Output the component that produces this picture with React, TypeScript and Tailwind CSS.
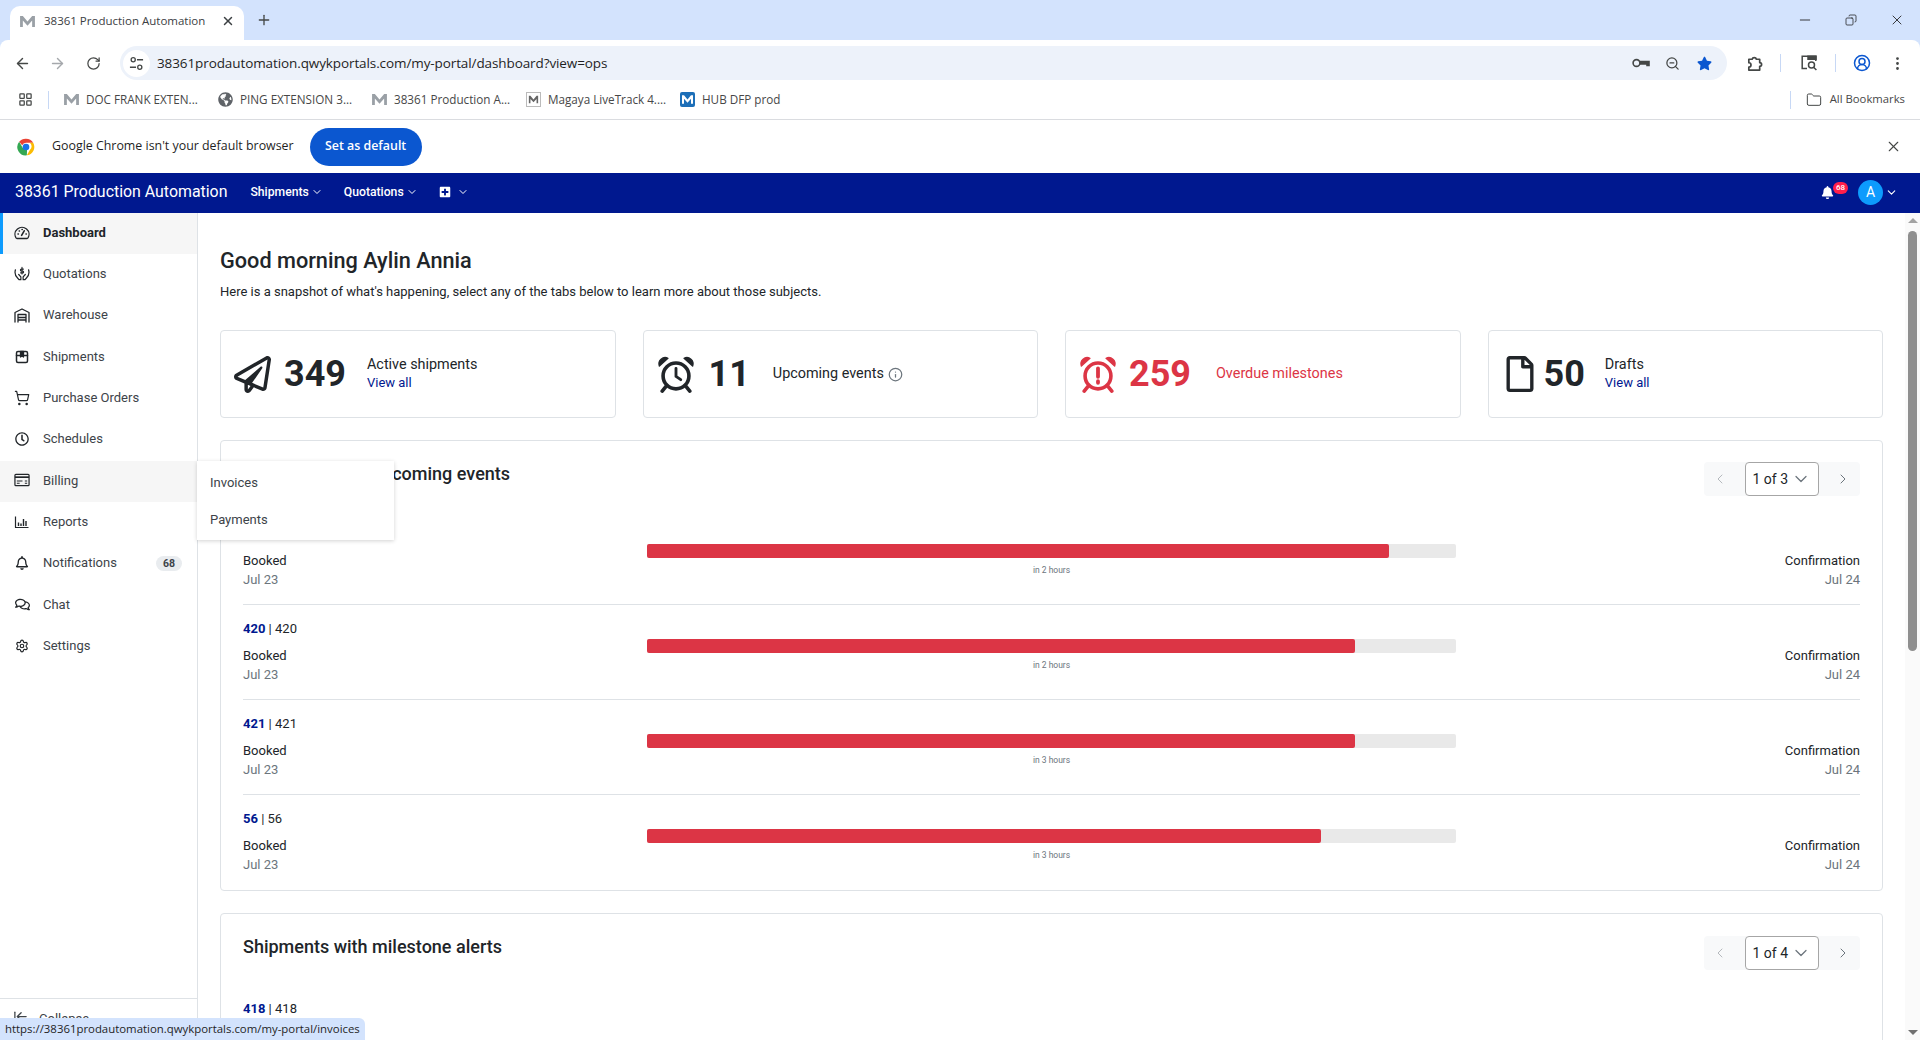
import React from "react"
import {
  ArrowLeft,
  ArrowRight,
  RotateCw,
  Plus,
  X,
  Minus,
  ZoomOut,
  ChevronDown,
  ChevronLeft,
  ChevronRight,
  Folder,
  ShoppingCart,
  Settings,
  Info,
  CircleUserRound,
  EllipsisVertical,
  LayoutGrid,
  Copy,
  ArrowLeftToLine,
} from "lucide-react"
import {
  FaRegPaperPlane,
  FaRegFile,
  FaBell,
  FaStar,
  FaPlusSquare,
  FaGlobeAmericas,
  FaRegClock,
  FaRegBell,
  FaRegComments,
} from "react-icons/fa"

const chromeFont = "font-['Open_Sans',sans-serif]"

const MLogo = ({ className = "text-[#9aa0a6]" }: { className?: string }) => (
  <svg viewBox="0 0 16 14" className={`w-[15px] h-[13px] ${className}`} fill="currentColor">
    <path d="M0 13V1h3l5 6 5-6h3v12h-3V6L8 11.5 3 6v7z" />
  </svg>
)

const ChromeLogo = () => (
  <svg viewBox="0 0 48 48" className="w-5 h-5">
    <path d="M24 4a20 20 0 0 1 17.3 10H24a10 10 0 0 0-9.2 6L7.6 11.6A20 20 0 0 1 24 4z" fill="#ea4335" />
    <path d="M41.3 14A20 20 0 0 1 26 43.9l8-13.9A10 10 0 0 0 32.6 14z" fill="#fbbc04" />
    <path d="M26 43.9A20 20 0 0 1 7.6 11.6L16 26a10 10 0 0 0 10.6 3.7z" fill="#34a853" />
    <circle cx="24" cy="24" r="8" fill="#1a73e8" />
  </svg>
)

const TuneIcon = () => (
  <svg viewBox="0 0 16 16" className="w-[15px] h-[15px] text-[#444746]" fill="none" stroke="currentColor" strokeWidth="1.4">
    <circle cx="4.5" cy="4" r="2.2" />
    <path d="M8.5 4H15M1 12h6.5" />
    <circle cx="11.5" cy="12" r="2.2" />
  </svg>
)

const KeyIcon = () => (
  <svg viewBox="0 0 18 12" className="w-[18px] h-[12px] text-[#444746]" fill="none" stroke="currentColor" strokeWidth="1.6">
    <circle cx="4.5" cy="6" r="3.4" />
    <path d="M8 4.5h9v4h-2V7H8" fill="currentColor" />
  </svg>
)

const PanelSearchIcon = () => (
  <svg viewBox="0 0 18 18" className="w-[18px] h-[18px] text-[#444746]" fill="none" stroke="currentColor" strokeWidth="1.5">
    <path d="M7 14.5H2.2V2.2h13.6V7" />
    <path d="M8 2.2h8v3H8z" fill="currentColor" />
    <circle cx="11.5" cy="11" r="3" />
    <path d="m13.6 13.2 2.8 2.8" />
  </svg>
)

const ExtensionIcon = () => (
  <svg viewBox="0 0 18 18" className="w-[17px] h-[17px] text-[#444746]" fill="none" stroke="currentColor" strokeWidth="1.8" strokeLinejoin="round">
    <path d="M3 4.500h3.500a2.300 2.300 0 0 1 4.500 0H14.500V8a2 2 0 0 1 0 4v4H3v-3.200a2.300 2.300 0 0 0 0-4.600z" />
  </svg>
)

const AlarmIcon = ({ alert = false }: { alert?: boolean }) => (
  <svg
    viewBox="0 0 40 40"
    className={`w-[38px] h-[38px] ${alert ? "text-[#dc3545]" : "text-[#212529]"}`}
    fill="none"
    stroke="currentColor"
  >
    <circle cx="20" cy="22" r="13.6" strokeWidth="3.8" />
    <path d="M2.5 11.5a6.5 6.5 0 0 1 9-8z" fill="currentColor" strokeWidth="1.5" strokeLinejoin="round" />
    <path d="M37.5 11.5a6.5 6.5 0 0 0-9-8z" fill="currentColor" strokeWidth="1.5" strokeLinejoin="round" />
    <path d="M9.5 33 5.5 38M30.5 33l4 5" strokeWidth="3.8" strokeLinecap="round" />
    {alert ? (
      <path d="M20 14v9M20 27.5v1.8" strokeWidth="4" strokeLinecap="round" />
    ) : (
      <path d="M20 14v8.5l5 3.5" strokeWidth="3" strokeLinecap="round" strokeLinejoin="round" />
    )}
  </svg>
)

const stroke = { fill: "none", stroke: "currentColor", strokeWidth: 1.3, strokeLinecap: "round" as const, strokeLinejoin: "round" as const }

const GaugeIcon = () => (
  <svg viewBox="0 0 16 16" className="w-4 h-4" {...stroke}>
    <path d="M3 13.5a1.4 1.4 0 0 1-1-.6A7 7 0 1 1 14 12.9a1.4 1.4 0 0 1-1 .6z" />
    <path d="m7.6 10.4 2.6-4.6" strokeWidth="1.6" />
    <path d="M4 9h.4M5.2 6h.3M8 4.6h.3M12 9h.3" strokeWidth="1.5" />
  </svg>
)

const HandsIcon = () => (
  <svg viewBox="0 0 17 16" className="w-[17px] h-4" {...stroke}>
    <path d="M1.500 3.500C.6 7 1.600 10.500 4 12.500l1.300 1.500h2V11L5 8.500" />
    <path d="M15.500 3.500c.9 3.500-.1 7-2.500 9l-1.300 1.500h-2V11L12 8.500" />
    <path d="M8.500 1v7M10 2.800H7.800a1 1 0 0 0 0 2h1.400a1 1 0 0 1 0 2H7" strokeWidth="1.200" />
  </svg>
)

const WarehouseIcon = () => (
  <svg viewBox="0 0 16 16" className="w-4 h-4" {...stroke}>
    <path d="M1 15V5.500L8 2l7 3.500V15" />
    <path d="M4 15V7.500h8V15M4 10.500h8M4 13h8" />
  </svg>
)

const BoxIcon = () => (
  <svg viewBox="0 0 16 16" className="w-4 h-4" {...stroke}>
    <rect x="2.500" y="2.500" width="11" height="11" rx="1.500" strokeWidth="1.500" />
    <path d="M2.500 6.500h11" strokeWidth="1.500" />
    <path d="M6.500 2.500h3V8L8 7l-1.500 1z" fill="currentColor" />
  </svg>
)

const BillingIcon = () => (
  <svg viewBox="0 0 17 14" className="w-[17px] h-[14px]" {...stroke} strokeLinecap="butt">
    <rect x="1" y="1" width="15" height="12" rx="1" strokeWidth="1.300" />
    <path d="M1 4h15" strokeWidth="1.800" />
    <path d="M3 8h6M11.500 8H14M11.500 10.500H14M3 10.500h3" strokeWidth="1.200" />
  </svg>
)

const ChartIcon = () => (
  <svg viewBox="0 0 16 16" className="w-4 h-4" {...stroke} strokeLinecap="butt">
    <path d="M1.500 2.500v11h13" strokeWidth="1.200" />
    <path d="M4.500 12V8.500M7 12V9.500M9.500 12V5M12 12V7" strokeWidth="1.400" />
  </svg>
)

const sidebarItems: { label: string; icon: React.ReactNode; active?: boolean; hover?: boolean; badge?: string }[] = [
  { label: "Dashboard", icon: <GaugeIcon />, active: true },
  { label: "Quotations", icon: <HandsIcon /> },
  { label: "Warehouse", icon: <WarehouseIcon /> },
  { label: "Shipments", icon: <BoxIcon /> },
  { label: "Purchase Orders", icon: <ShoppingCart size={16} strokeWidth={1.8} /> },
  { label: "Schedules", icon: <FaRegClock size={14} /> },
  { label: "Billing", icon: <BillingIcon />, hover: true },
  { label: "Reports", icon: <ChartIcon /> },
  { label: "Notifications", icon: <FaRegBell size={14} />, badge: "68" },
  { label: "Chat", icon: <FaRegComments size={15} /> },
  { label: "Settings", icon: <Settings size={14} strokeWidth={2} /> },
]

const bookmarks = [
  { label: "DOC FRANK EXTEN...", icon: <MLogo /> },
  { label: "PING EXTENSION 3...", icon: <FaGlobeAmericas size={15} className="text-[#5f6368]" /> },
  { label: "38361 Production A...", icon: <MLogo /> },
  {
    label: "Magaya LiveTrack 4....",
    icon: (
      <span className="flex h-[15px] w-[15px] items-center justify-center border border-[#bbb]">
        <MLogo className="scale-75 text-[#666]" />
      </span>
    ),
  },
  {
    label: "HUB DFP prod",
    icon: (
      <span className="flex h-[15px] w-[15px] items-center justify-center rounded-[2px] bg-[#1d6fb8]">
        <MLogo className="scale-75 text-white" />
      </span>
    ),
  },
]

const events = [
  { id: "419", pct: 91.7, when: "in 2 hours" },
  { id: "420", pct: 87.5, when: "in 2 hours" },
  { id: "421", pct: 87.5, when: "in 3 hours" },
  { id: "56", pct: 83.3, when: "in 3 hours" },
]

const Pager = ({ label, className = "" }: { label: string; className?: string }) => (
  <div className={`flex h-[34px] w-[156px] items-center justify-between rounded bg-[#f8f9fa] ${className}`}>
    <ChevronLeft size={16} strokeWidth={1.5} className="ml-[8px] text-[#b5b9bd]" />
    <div className="flex h-full w-[74px] items-center justify-between rounded border border-[#a6a6a6] bg-white pl-[7px] pr-[7px] text-[14px] text-[#212529]">
      {label}
      <ChevronDown size={20} strokeWidth={1.5} className="text-[#6c757d]" />
    </div>
    <ChevronRight size={16} strokeWidth={1.5} className="mr-[9px] text-[#6c757d]" />
  </div>
)

const StatCard = ({
  icon,
  value,
  label,
  link,
  danger,
  spacing,
}: {
  icon: React.ReactNode
  value: string
  label: React.ReactNode
  link?: boolean
  danger?: boolean
  spacing: string
}) => (
  <div className={`flex h-[88px] flex-1 items-center rounded border border-[#dee2e6] bg-white pl-[13px] ${danger ? "text-[#dc3545]" : "text-[#212529]"}`}>
    <div className="flex w-[38px] justify-start">{icon}</div>
    <div className={`text-[36px] leading-none font-bold ${spacing}`}>{value}</div>
    <div className="text-[14.4px] leading-[18px]">
      <div>{label}</div>
      {link && <div className="text-[13px] text-[#00188f]">View all</div>}
    </div>
  </div>
)

const App = () => {
  return (
    <div className="relative flex h-[1040px] w-[1920px] flex-col overflow-hidden bg-white font-['Roboto',sans-serif] text-[#212529]">
      {/* browser chrome */}
      <div className={`h-[80px] shrink-0 bg-[#d3e3fd] ${chromeFont}`}>
        <div className="flex h-10 items-end pl-[10px]">
          <div className="flex h-[34px] w-[234px] items-center rounded-t-[10px] bg-white pb-[4px] pl-[10px] pr-[9px] text-[11.5px] text-[#3c4043]">
            <MLogo />
            <span className="ml-[9px] flex-1 truncate">38361 Production Automation</span>
            <X size={14} strokeWidth={2.5} className="text-[#3c4043]" />
          </div>
          <Plus size={16} className="mb-[12px] ml-[12px] text-[#444746]" />
          <div className="mb-[12px] ml-auto flex items-center pr-[15px] text-[#1f1f1f]">
            <Minus size={16} strokeWidth={1.3} />
            <Copy size={12} strokeWidth={1.5} className="ml-[32px] -scale-x-100" />
            <X size={16} strokeWidth={1.3} className="ml-[32px]" />
          </div>
        </div>
        <div className="flex h-10 items-center rounded-t-[8px] bg-white pl-[14px]">
          <div className="flex h-[46px] items-center pt-[6px]">
            <ArrowLeft size={17} className="text-[#444746]" />
            <ArrowRight size={17} className="ml-[18px] text-[#a5a8ac]" />
            <RotateCw size={15} className="ml-[20px] text-[#444746]" />
            <div className="ml-[19px] flex h-[34px] w-[1607px] items-center rounded-full bg-[#edf2fa] pl-[3px] pr-[15px] text-[13.5px] text-[#1f1f1f]">
              <span className="flex h-[27px] w-[27px] items-center justify-center rounded-full bg-white">
                <TuneIcon />
              </span>
              <span className="ml-[7px] flex-1 tracking-[-0.1px]">38361prodautomation.qwykportals.com/my-portal/dashboard?view=ops</span>
              <KeyIcon />
              <ZoomOut size={15} className="ml-[15px] text-[#444746]" />
              <FaStar size={15} className="ml-[17px] text-[#0b57d0]" />
            </div>
            <span className="ml-[19px]">
              <ExtensionIcon />
            </span>
            <span className="ml-[17px] h-[18px] w-px bg-[#c7d8f5]" />
            <span className="ml-[19px]">
              <PanelSearchIcon />
            </span>
            <span className="ml-[17px] h-[18px] w-px bg-[#c7d8f5]" />
            <CircleUserRound size={18} className="ml-[17px] text-[#0b57d0]" />
            <EllipsisVertical size={17} className="ml-[18px] text-[#444746]" />
          </div>
        </div>
      </div>
      <div className={`flex h-[40px] shrink-0 items-center border-b border-[#dadce0] bg-white pl-[18px] pr-[15px] text-[11.7px] text-[#474747] ${chromeFont}`}>
        <LayoutGrid size={15} className="text-[#444746]" />
        <span className="ml-[15px] mr-[15px] h-[18px] w-px bg-[#c7d8f5]" />
        <div className="flex items-center">
          {bookmarks.map((b) => (
            <div key={b.label} className="flex w-[154px] items-center gap-[7px] whitespace-nowrap">
              {b.icon}
              <span>{b.label}</span>
            </div>
          ))}
        </div>
        <span className="ml-auto mr-[15px] h-[18px] w-px bg-[#c7d8f5]" />
        <Folder size={16} strokeWidth={1.5} className="text-[#444746]" />
        <span className="ml-[8px] text-[11.3px]">All Bookmarks</span>
      </div>
      {/* infobar */}
      <div className={`flex h-[53px] shrink-0 items-center pl-[16px] pr-[18px] text-[12.4px] text-[#1f1f1f] ${chromeFont}`}>
        <ChromeLogo />
        <span className="ml-[16px]">Google Chrome isn't your default browser</span>
        <button className="ml-[16px] h-[38px] w-[112px] rounded-full bg-[#0b57d0] text-[12.4px] font-semibold text-white">Set as default</button>
        <X size={17} strokeWidth={1.5} className="ml-auto text-[#444746]" />
      </div>
      {/* app nav */}
      <div className="flex h-[40px] shrink-0 items-center bg-[#00188f] pb-[2px] pl-[15px] pr-[22px] text-white">
        <span className="text-[15.9px]">38361 Production Automation</span>
        <span className="ml-[23px] flex items-center gap-[2px] text-[12.2px] font-medium">
          Shipments <ChevronDown size={12} />
        </span>
        <span className="ml-[21px] flex items-center gap-[2px] text-[12.2px] font-medium">
          Quotations <ChevronDown size={12} />
        </span>
        <span className="ml-[21px] flex items-center gap-[6px]">
          <FaPlusSquare size={12} /> <ChevronDown size={12} />
        </span>
        <div className="relative ml-auto mr-[18px] flex">
          <FaBell size={13} />
          <span className="absolute -right-[14px] -top-[4px] rounded-full bg-[#ff1f4b] px-[3px] text-[8px] leading-[12px] font-medium">68</span>
        </div>
        <span className="ml-[6px] flex h-[25px] w-[25px] items-center justify-center rounded-full bg-[#0d9bfd] text-[14px]">A</span>
        <ChevronDown size={13} className="ml-[2px]" />
      </div>
      {/* body */}
      <div className="flex min-h-0 flex-1">
        <aside className="flex w-[198px] shrink-0 flex-col border-r border-[#dee2e6] text-[13px] text-[#3d4349]">
          {sidebarItems.map((item) => (
            <div
              key={item.label}
              className={`flex h-[41.3px] items-center pb-[2px] pr-[15px] ${item.active ? "border-l-[3px] border-[#0d9bfd] bg-[#f6f6f6] pl-[11px] font-bold text-[#212529]" : "pl-[14px]"} ${item.hover ? "bg-[#f6f6f6]" : ""}`}
            >
              <span className="flex w-[16px] justify-center text-[#212529]">{item.icon}</span>
              <span className="ml-[13px]">{item.label}</span>
              {item.badge && (
                <span className="ml-auto rounded-full bg-[#e9ecef] px-[7px] text-[10.5px] leading-[15px] font-bold">{item.badge}</span>
              )}
            </div>
          ))}
          <div className="mt-auto flex h-[42px] items-start border-t border-[#dee2e6] pl-[13px] pt-[10px]">
            <ArrowLeftToLine size={15} />
            <span className="ml-[11px]">Collapse</span>
          </div>
        </aside>
        <main className="min-w-0 flex-1 overflow-hidden px-[22px]">
          <h1 className="mt-[34px] text-[21.7px] leading-[28px] font-medium">Good morning Aylin Annia</h1>
          <p className="mt-[6px] text-[13px] leading-[21px]">
            Here is a snapshot of what's happening, select any of the tabs below to learn more about those subjects.
          </p>
          <div className="mt-[28px] flex gap-[27px]">
            <StatCard icon={<FaRegPaperPlane size={37} />} value="349" label="Active shipments" link spacing="ml-[12px] mr-[21px]" />
            <StatCard
              icon={<AlarmIcon />}
              value="11"
              label={
                <span className="flex items-center gap-[4px]">
                  Upcoming events <Info size={15} className="text-[#6c757d]" />
                </span>
              }
              spacing="ml-[14px] mr-[23px]"
            />
            <StatCard icon={<AlarmIcon alert />} value="259" label="Overdue milestones" danger spacing="ml-[12px] mr-[25px]" />
            <StatCard icon={<FaRegFile size={36} />} value="50" label="Drafts" link spacing="ml-[4px] mr-[20px]" />
          </div>
          <section className="mt-[22px] rounded border border-[#dee2e6] px-[22px]">
            <div className="flex h-[69px] items-start justify-between pt-[22px]">
              <h2 className="text-[18px] leading-[22px] font-medium">Shipments with upcoming events</h2>
              <Pager label="1 of 3" className="-mt-px" />
            </div>
            {events.map((e, i) => (
              <div key={e.id} className={`flex h-[95px] text-[13px] leading-[19px] ${i < 3 ? "border-b border-[#dee2e6]" : ""}`}>
                <div className="w-[404px] pt-[14px]">
                  <div className="mb-[8px]">
                    <b className="font-bold text-[#00188f]">{e.id}</b> | {e.id}
                  </div>
                  <div>Booked</div>
                  <div className="text-[#6c757d]">Jul 23</div>
                </div>
                <div className="flex-1">
                  <div className="mt-[34px] h-[14px] w-[809px] rounded-[2px] bg-[#e9e9e9]">
                    <div className="h-full rounded-[2px] bg-[#dc3545]" style={{ width: `${e.pct}%` }} />
                  </div>
                  <div className="mt-[6px] w-[809px] text-center text-[8.5px] leading-[12px] text-[#6c757d]">{e.when}</div>
                </div>
                <div className="pt-[41px] text-right">
                  <div>Confirmation</div>
                  <div className="text-[#6c757d]">Jul 24</div>
                </div>
              </div>
            ))}
          </section>
          <section className="mt-[22px] h-[300px] rounded border border-[#dee2e6] px-[22px]">
            <div className="flex h-[75px] items-start justify-between pt-[22px]">
              <h2 className="text-[18px] leading-[22px] font-medium">Shipments with milestone alerts</h2>
              <Pager label="1 of 4" />
            </div>
            <div className="mt-[10px] text-[13px] leading-[19px]">
              <b className="font-bold text-[#00188f]">418</b> | 418
            </div>
            <div className="text-[13px] leading-[19px] text-[#dc3545]">Overdue by 6 hours</div>
          </section>
        </main>
        <div className="flex w-[15px] shrink-0 flex-col items-center bg-[#fafafa]">
          <span className="mt-[5px] h-0 w-0 border-x-[5px] border-b-[5px] border-x-transparent border-b-[#a3a3a3]" />
          <span className="mt-[8px] h-[420px] w-[9px] rounded-full bg-[#8f8f8f]" />
          <span className="mt-auto mb-[5px] h-0 w-0 border-x-[5px] border-t-[5px] border-x-transparent border-t-[#707070]" />
        </div>
      </div>
      {/* billing flyout */}
      <div className="absolute left-[197px] top-[461px] flex h-[79px] w-[197px] flex-col justify-center gap-[16px] bg-white pl-[13px] text-[13px] leading-[21px] text-[#3d4349] shadow-[0_1px_4px_rgba(0,0,0,0.18)]">
        <span>Invoices</span>
        <span>Payments</span>
      </div>
      {/* link status bubble */}
      <div className={`absolute bottom-0 left-0 flex h-[22px] w-[365px] items-center rounded-tr-[6px] bg-[#d3e3fd] pl-[5px] text-[11.4px] whitespace-nowrap text-[#1f1f1f] ${chromeFont}`}>
        https://38361prodautomation.qwykportals.com/my-portal/invoices
      </div>
    </div>
  )
}

export default App
